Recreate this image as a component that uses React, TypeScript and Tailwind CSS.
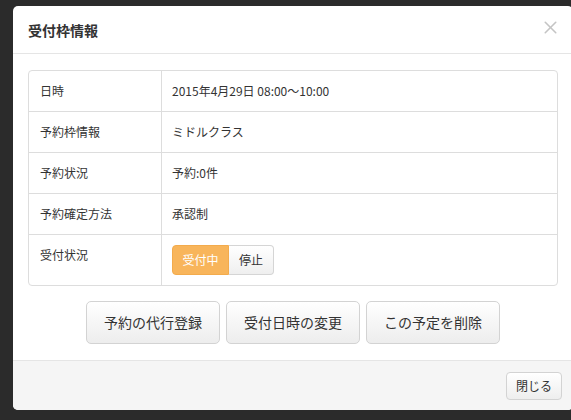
import { X } from "lucide-react";

const rows = [
	{ label: "日時", value: "2015年4月29日 08:00〜10:00" },
	{ label: "予約枠情報", value: "ミドルクラス" },
	{ label: "予約状況", value: "予約:0件" },
	{ label: "予約確定方法", value: "承認制" },
];

const actions = ["予約の代行登録", "受付日時の変更", "この予定を削除"];

const App = () => {
	return (
		<div
			className="w-[571px] h-[420px] overflow-hidden bg-[#2b2b2b] text-[#333] pt-[6px] pl-[13px]"
			style={{ fontFamily: '"Noto Sans CJK JP", "Liberation Sans", sans-serif' }}
		>
			{/* modal */}
			<div className="w-[560px] h-[404px] bg-white rounded-[5px] flex flex-col">
				{/* header */}
				<div className="h-[48px] border-b border-[#e5e5e5] flex items-center justify-between pl-[15px] pr-[12px]">
					<h1 className="text-[14px] font-bold leading-none">受付枠情報</h1>
					<X size={21} strokeWidth={1.8} className="text-[#c4c4c4] -mt-[4px]" />
				</div>

				{/* body */}
				<div className="px-[15px] pt-[16px]">
					<div className="border border-[#ddd] rounded-[4px] w-[530px] text-[12px]">
						{rows.map((row) => (
							<div key={row.label} className="flex h-[41px] border-b border-[#ddd]">
								<div className="w-[133px] border-r border-[#ddd] pl-[11px] flex items-center">
									{row.label}
								</div>
								<div className="pl-[10px] flex items-center">{row.value}</div>
							</div>
						))}
						<div className="flex h-[50px]">
							<div className="w-[133px] border-r border-[#ddd] pl-[11px] pt-[11px]">受付状況</div>
							<div className="pl-[10px] pt-[10px]">
								<div className="flex h-[30px]">
									<button className="w-[57px] bg-[#f8b55b] border border-[#f3ab4c] rounded-l-[4px] text-white text-[12px]">
										受付中
									</button>
									<button className="w-[45px] bg-gradient-to-b from-white to-[#efefef] border border-l-0 border-[#d5d5d5] rounded-r-[4px] text-[12px] text-[#333]">
										停止
									</button>
								</div>
							</div>
						</div>
					</div>

					<div className="flex justify-center gap-[6px] mt-[15px]">
						{actions.map((label) => (
							<button
								key={label}
								className="w-[134px] h-[43px] rounded-[5px] border border-[#d3d3d3] bg-gradient-to-b from-white to-[#ededed] text-[14px] text-[#333]"
							>
								{label}
							</button>
						))}
					</div>
				</div>

				{/* footer */}
				<div className="mt-[16px] flex-1 bg-[#f5f5f5] border-t border-[#e5e5e5] rounded-b-[5px] flex justify-end items-start pt-[11px] pr-[11px]">
					<button className="w-[56px] h-[28px] rounded-[4px] border border-[#d3d3d3] bg-gradient-to-b from-white to-[#eeeeee] text-[12px] text-[#333]">
						閉じる
					</button>
				</div>
			</div>
		</div>
	);
};

export default App;
